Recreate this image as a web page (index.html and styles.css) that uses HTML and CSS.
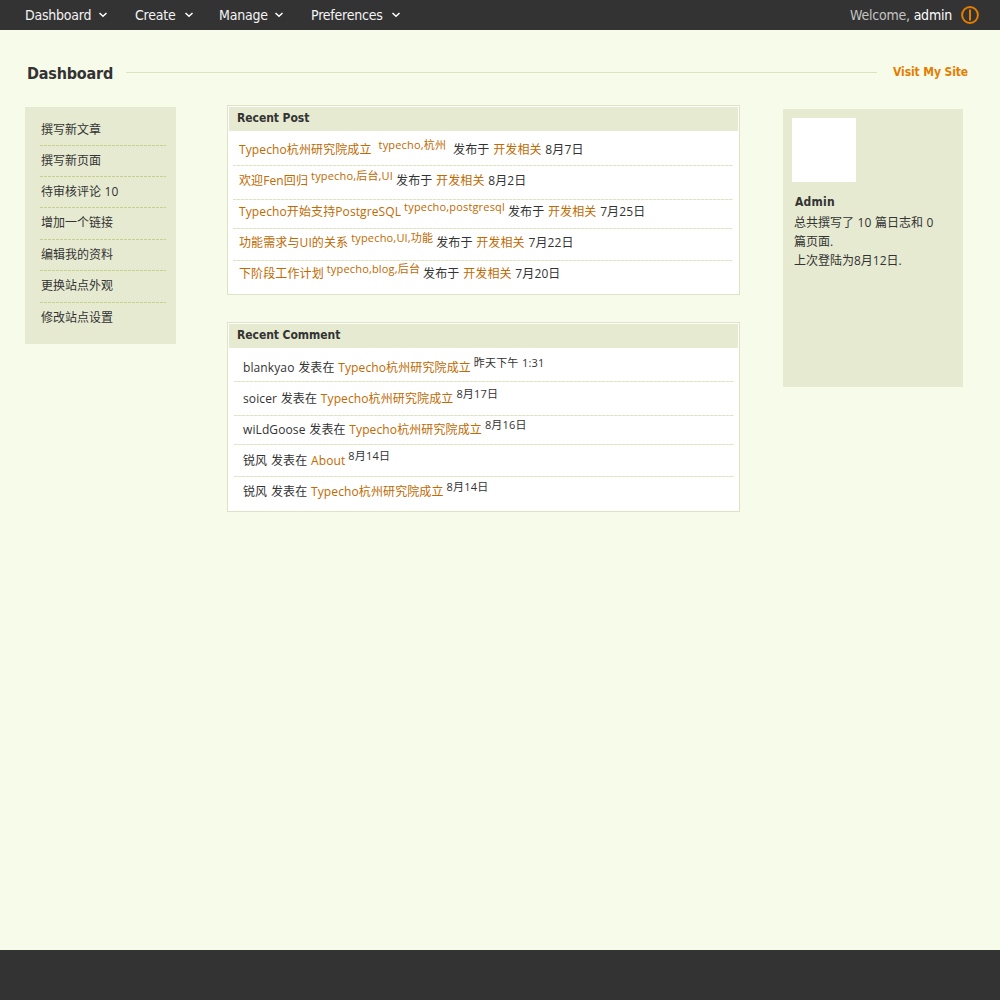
FILE: index.html
```
<!DOCTYPE html>
<html lang="zh-CN">
<head>
<meta charset="utf-8">
<title>Dashboard</title>
<link rel="stylesheet" href="styles.css">
</head>
<body>
<header class="topbar">
  <nav class="menu">
    <a class="menu-item m-dashboard"><span class="label">Dashboard</span><svg class="chev" viewBox="0 0 10 8"><path d="M1.5 2 L5 5.3 L8.5 2"/></svg></a>
    <a class="menu-item m-create"><span class="label">Create</span><svg class="chev" viewBox="0 0 10 8"><path d="M1.5 2 L5 5.3 L8.5 2"/></svg></a>
    <a class="menu-item m-manage"><span class="label">Manage</span><svg class="chev" viewBox="0 0 10 8"><path d="M1.5 2 L5 5.3 L8.5 2"/></svg></a>
    <a class="menu-item m-preferences"><span class="label">Preferences</span><svg class="chev" viewBox="0 0 10 8"><path d="M1.5 2 L5 5.3 L8.5 2"/></svg></a>
  </nav>
  <div class="user"><span class="welcome">Welcome, <b>admin</b></span>
    <svg class="power" viewBox="0 0 18 18"><circle cx="9" cy="9" r="7.9"/><path d="M9 3.5V14.5"/></svg>
  </div>
</header>
<div class="title-row">
  <h1>Dashboard</h1><span class="rule"></span><a class="visit">Visit My Site</a>
</div>
<main class="columns">
  <ul class="shortcuts">
    <li>撰写新文章</li>
    <li>撰写新页面</li>
    <li>待审核评论 10</li>
    <li class="tall">增加一个链接</li>
    <li>编辑我的资料</li>
    <li class="tall">更换站点外观</li>
    <li>修改站点设置</li>
  </ul>
  <div class="center">
    <section class="panel">
      <h2>Recent Post</h2>
      <ul class="list posts">
        <li><a>Typecho杭州研究院成立</a><sup class="wide">typecho,杭州</sup>发布于 <a>开发相关</a> 8月7日</li>
        <li><a>欢迎Fen回归</a><sup>typecho,后台,UI</sup>发布于 <a>开发相关</a> 8月2日</li>
        <li><a>Typecho开始支持PostgreSQL</a><sup>typecho,postgresql</sup>发布于 <a>开发相关</a> 7月25日</li>
        <li><a>功能需求与UI的关系</a><sup>typecho,UI,功能</sup>发布于 <a>开发相关</a> 7月22日</li>
        <li><a>下阶段工作计划</a><sup>typecho,blog,后台</sup>发布于 <a>开发相关</a> 7月20日</li>
      </ul>
    </section>
    <section class="panel">
      <h2>Recent Comment</h2>
      <ul class="list comments">
        <li>blankyao 发表在 <a>Typecho杭州研究院成立</a><sup>昨天下午 1:31</sup></li>
        <li>soicer 发表在 <a>Typecho杭州研究院成立</a><sup>8月17日</sup></li>
        <li>wiLdGoose 发表在 <a>Typecho杭州研究院成立</a><sup>8月16日</sup></li>
        <li>锐风 发表在 <a>About</a><sup>8月14日</sup></li>
        <li>锐风 发表在 <a>Typecho杭州研究院成立</a><sup>8月14日</sup></li>
      </ul>
    </section>
  </div>
  <aside class="profile">
    <div class="avatar"></div>
    <h3>Admin</h3>
    <p>总共撰写了 10 篇日志和 0<br>篇页面.<br>上次登陆为8月12日.</p>
  </aside>
</main>
<footer class="footer"></footer>
</body>
</html>
```

FILE: styles.css
```
* { box-sizing: border-box; margin: 0; padding: 0; }
body {
  height: 1000px;
  display: flex;
  flex-direction: column;
  background: #f7fbe9;
  color: #333;
  font: 12px/20px "Open Sans", "Noto Sans CJK SC", sans-serif;
  word-spacing: 0.5px;
  overflow: hidden;
}
ul { list-style: none; }
.topbar {
  height: 30px;
  flex: none;
  display: flex;
  justify-content: space-between;
  align-items: center;
  padding: 0 21px 0 25px;
  background: #333;
  color: #f4f4f4;
  font: 14px/30px "DejaVu Sans Condensed", "DejaVu Sans", sans-serif;
  letter-spacing: -0.22px;
  word-spacing: 0;
}
.menu, .menu-item, .user { display: flex; align-items: center; }
.menu-item { justify-content: space-between; white-space: nowrap; }
.m-dashboard { width: 83px; margin-right: 27px; }
.m-create { width: 59px; margin-right: 25px; }
.m-manage { width: 65px; margin-right: 27px; }
.m-preferences { width: 90px; }
.chev { width: 10px; height: 8px; fill: none; stroke: #fff; stroke-width: 1.5; }
.user { gap: 9px; }
.welcome { color: #c4c4c4; }
.welcome b { color: #fff; font-weight: 400; }
.power { width: 18px; height: 18px; fill: none; stroke: #e57d00; stroke-width: 2; }
.title-row {
  height: 75px;
  flex: none;
  display: flex;
  align-items: center;
  padding: 10px 32px 0 27px;
}
h1, h2, h3, .visit {
  font-family: "DejaVu Sans Condensed", "DejaVu Sans", sans-serif;
  font-weight: 700;
  white-space: nowrap;
  word-spacing: 0;
}
h1 { width: 99px; padding-top: 2px; font-size: 16px; letter-spacing: -0.2px; }
.rule { flex: 1; height: 1px; background: #dde3bc; }
.visit { width: 75px; margin-left: 16px; padding-bottom: 2px; font-size: 12px; color: #e57d00; letter-spacing: -0.1px; }
.columns {
  flex: 1;
  display: grid;
  grid-template-columns: 151px 513px 180px;
  column-gap: 51px;
  justify-content: start;
  align-items: start;
  padding-left: 25px;
}
.shortcuts { height: 237px; margin-top: 2px; padding: 8px 10px 0 15px; background: #e6ead1; }
.shortcuts li {
  height: 31px;
  padding: 5px 0 0 1px;
  white-space: nowrap;
  background: repeating-linear-gradient(90deg, #c6d08f 0 3px, transparent 3px 4px) bottom / 100% 1px no-repeat;
}
.shortcuts li.tall { height: 32px; }
.shortcuts li:last-child { background: none; }
.center { display: grid; row-gap: 27px; }
.panel { height: 190px; padding: 1px; background: #fff; border: 1px solid #dfe3c6; }
h2 { height: 24px; padding-left: 8px; background: #e6ead1; font-size: 12px; line-height: 22px; letter-spacing: -0.05px; }
.list { padding: 0 5px 0 4px; letter-spacing: 0.11px; }
.comments { padding: 0 4px 0 5px; }
.list li {
  white-space: nowrap;
  padding-left: 6px;
  background: repeating-linear-gradient(90deg, #dfe3c4 0 3px, #f0f2e2 3px 4px) bottom / 100% 1px no-repeat;
}
.comments li { padding-left: 9px; }
.list li:nth-child(1) { height: 35px; padding-top: 9px; }
.list li:nth-child(2) { height: 34px; padding-top: 5px; }
.list li:nth-child(3) { height: 29px; padding-top: 2px; }
.list li:nth-child(4) { height: 32px; padding-top: 4px; }
.list li:nth-child(5) { height: 30px; padding-top: 3px; background: none; }
.comments li:nth-child(1) { height: 34px; padding-top: 10px; }
.comments li:nth-child(2) { padding-top: 7px; }
.comments li:nth-child(3) { padding-top: 4px; }
.comments li:nth-child(4) { padding-top: 6px; }
.comments li:nth-child(5) { padding-top: 5px; }
.list a, .posts sup { color: #c06a00; }
sup { margin: 0 3px; font-size: 11px; line-height: 0; letter-spacing: 0.17px; vertical-align: 5px; }
sup.wide { margin: 0 7px; }
.profile { width: 180px; height: 278px; margin: 4px 0 0 -8px; padding: 9px 9px 0; background: #e6ead1; }
.avatar { width: 64px; height: 64px; background: #fff; }
h3 { margin-top: 10px; padding-left: 3px; font-size: 12px; line-height: 20px; letter-spacing: 0.25px; }
.profile p { margin-top: 1px; padding-left: 2px; line-height: 19px; white-space: nowrap; }
.footer { height: 50px; flex: none; background: #333; }
```
